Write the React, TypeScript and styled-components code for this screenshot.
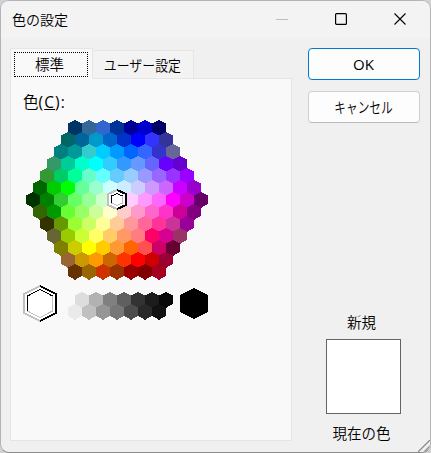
import React from "react";
import styled, { createGlobalStyle } from "styled-components";

const Global = createGlobalStyle`
  * { box-sizing: border-box; }
  body { margin: 0; background: #d2d2d2; overflow: hidden; }
`;

const Dialog = styled.div`
  width: 431px;
  height: 453px;
  display: flex;
  flex-direction: column;
  position: relative;
  overflow: hidden;
  background: #f0f0f0;
  border: 1px solid #b4b4b4;
  border-bottom-color: #8c8c8c;
  border-radius: 9px;
  color: #000;
  font: 350 15px/20px "Open Sans", "Noto Sans CJK JP", sans-serif;
`;

const TitleBar = styled.header`
  height: 37px;
  flex: none;
  display: flex;
  align-items: center;
  background: #f3f3f3;
  padding: 0 0 1px 11px;
`;

const Title = styled.h1`
  margin: 0;
  flex: 1;
  font-size: 14px;
  font-weight: 350;
  font-family: "Noto Sans CJK JP", sans-serif;
`;

const Controls = styled.div`
  display: flex;
`;

const ControlButton = styled.button`
  width: 59px;
  height: 36px;
  padding: 0;
  border: 0;
  background: none;
  display: flex;
  align-items: center;
  justify-content: center;
`;

const Body = styled.div`
  flex: 1;
  display: flex;
  gap: 15px;
  padding: 10px 10px 11px 9px;
`;

const TabArea = styled.section`
  width: 283px;
  display: flex;
  flex-direction: column;
`;

const TabList = styled.div`
  display: flex;
  align-items: flex-end;
  height: 31px;
  margin-bottom: -1px;
`;

const Tab = styled.button<{ $active?: boolean }>`
  position: relative;
  z-index: ${(p) => (p.$active ? 1 : 0)};
  width: ${(p) => (p.$active ? 83 : 101)}px;
  height: ${(p) => (p.$active ? 31 : 29)}px;
  padding: ${(p) => (p.$active ? "2px 3px 1px" : "0 2px 0 0")};
  border: 1px solid #e5e5e5;
  border-left-width: ${(p) => (p.$active ? 1 : 0)}px;
  border-bottom-color: ${(p) => (p.$active ? "#f9f9f9" : "#e5e5e5")};
  background: ${(p) => (p.$active ? "#f9f9f9" : "#f3f3f3")};
  color: #000;
  font: 350 14.5px/20px "Noto Sans CJK JP", sans-serif;
  white-space: nowrap;
`;

const FocusFrame = styled.span`
  display: grid;
  place-items: center;
  width: 74px;
  height: 25px;
  padding: 0 3px 1px 0;
  border: 1px dotted #000;
`;

const Kana = styled.span<{ $scale: number }>`
  display: inline-block;
  transform: scaleX(${(p) => p.$scale});
  margin: 0 -8px;
`;

const TabPanel = styled.div`
  flex: 1;
  width: 282px;
  border: 1px solid #e5e5e5;
  background: #f9f9f9;
  padding: 12px 12px 0;
`;

const Label = styled.div`
  height: 25px;
  line-height: 21px;
  font-size: 15.5px;
  font-family: "Noto Sans CJK JP", sans-serif;
`;

const Mnemonic = styled.span`
  font-family: "Open Sans", sans-serif;
  font-weight: 400;
  letter-spacing: 1.1px;
`;

const Palette = styled.svg`
  display: block;
`;

const Side = styled.aside`
  width: 112px;
  display: flex;
  flex-direction: column;
  align-items: center;
`;

const Button = styled.button<{ $primary?: boolean }>`
  width: 112px;
  height: 32px;
  flex: none;
  margin-bottom: 11px;
  padding: 0 1px 0 0;
  border: 1px solid ${(p) => (p.$primary ? "#0078d4" : "#d0d0d0")};
  border-bottom-color: ${(p) => (p.$primary ? "#0078d4" : "#bababa")};
  border-radius: 4px;
  background: #fdfdfd;
  color: #000;
  font: ${(p) => (p.$primary ? 400 : 350)} 15px/20px "Open Sans", "Noto Sans CJK JP", sans-serif;
`;

const Preview = styled.div`
  margin: auto 2px -3px 0;
  display: flex;
  flex-direction: column;
  align-items: center;
  line-height: 22px;
  font-family: "Noto Sans CJK JP", sans-serif;
  font-size: 14.5px;
`;

const Swatch = styled.div`
  width: 75px;
  height: 75px;
  margin: 6px 0 8px;
  border: 1px solid #646464;
  background: #fff;
`;

const PreviewLabel = styled.span`
  margin-left: -3px;
`;

const Grip = styled.svg`
  position: absolute;
  right: 0;
  bottom: 0;
`;

const rows = [
  "003366 336699 3366CC 003399 000099 0000CC 000066",
  "006666 006699 0099CC 0066CC 0033CC 0000FF 3333FF 333399",
  "008080 009999 33CCCC 00CCFF 0099FF 0066FF 3366FF 3333CC 666699",
  "339966 00CC99 00FFCC 00FFFF 33CCFF 3399FF 6699FF 6666FF 6600FF 6600CC",
  "339933 00CC66 00FF99 66FFCC 66FFFF 66CCFF 99CCFF 9999FF 9966FF 9933FF 9900FF",
  "006600 00CC00 00FF00 66FF99 99FFCC CCFFFF CCECFF CCCCFF CC99FF CC66FF CC00FF 9900CC",
  "003300 008000 33CC33 66FF66 99FF99 CCFFCC FFFFFF FFCCFF FF99FF FF66FF FF00FF CC00CC 660066",
  "336600 009900 66FF33 99FF66 CCFF99 FFFFCC FFCCCC FF99CC FF66CC FF33CC CC0099 800080",
  "333300 669900 99FF33 CCFF66 FFFF99 FFCC99 FF9999 FF6699 FF3399 CC3399 990099",
  "666633 99CC00 CCFF33 FFFF66 FFCC66 FF9966 FF7C80 FF0066 D60093 993366",
  "808000 CCCC00 FFFF00 FFCC00 FF9933 FF6600 FF5050 CC0066 660033",
  "996633 CC9900 FF9900 CC6600 FF3300 FF0000 CC0000 990033",
  "663300 996600 CC3300 993300 990000 800000 A50021",
].map((r) => r.split(" "));

const lightGreys = "DDDDDD B2B2B2 808080 5F5F5F 333333 1C1C1C 080808".split(" ");
const darkGreys = "EAEAEA C0C0C0 969696 777777 4D4D4D 292929 111111".split(" ");

const hexPoints = (x: number, y: number, w: number, h: number, cap: number) =>
  [
    [x + w / 2, y],
    [x + w, y + cap],
    [x + w, y + h - cap],
    [x + w / 2, y + h],
    [x, y + h - cap],
    [x, y + cap],
  ]
    .map((p) => p.join(","))
    .join(" ");

const HexRow = ({ colors, x, y }: { colors: string[]; x: number; y: number }) => (
  <g>
    {colors.map((c, i) => (
      <polygon key={i} points={hexPoints(x + i * 14, y - 0.3, 14, 16.2, 4)} fill={`#${c}`} />
    ))}
  </g>
);

/* Selection ring: black on the right half, grey on the left, inverted inside. */
const Ring = ({ x, y, w, h, cap, inset }: { x: number; y: number; w: number; h: number; cap: number; inset: number }) => {
  const m = x + w / 2;
  const l = x + inset;
  const r = x + w - inset;
  return (
    <g fill="none">
      <polygon points={hexPoints(x, y, w, h, cap)} fill="#fff" />
      <path d={`M${m} ${y + 1}L${x + 1} ${y + cap}V${y + h - cap}L${m} ${y + h - 1}`} stroke="#c0c0c0" strokeWidth="2" />
      <path d={`M${m} ${y + 1}L${x + w - 1} ${y + cap}V${y + h - cap}L${m} ${y + h - 1}`} stroke="#000" strokeWidth="2" />
      <path d={`M${r} ${y + cap + 2}V${y + h - cap - 2}L${m} ${y + h - inset}L${l} ${y + h - cap - 2}`} stroke="#c0c0c0" />
      <path d={`M${l} ${y + h - cap - 2}V${y + cap + 2}L${m} ${y + inset}L${r} ${y + cap + 2}`} stroke="#000" />
    </g>
  );
};

export default function App() {
  return (
    <>
      <Global />
      <Dialog>
        <TitleBar>
          <Title>色の設定</Title>
          <Controls>
            <ControlButton aria-label="最小化">
              <svg width="13" height="12"><path d="M0 6.5H12" stroke="#bdbdbd" /></svg>
            </ControlButton>
            <ControlButton aria-label="最大化">
              <svg width="13" height="12"><rect x=".6" y=".6" width="10.8" height="10.8" rx="1" fill="none" stroke="#000" strokeWidth="1.2" /></svg>
            </ControlButton>
            <ControlButton aria-label="閉じる">
              <svg width="13" height="12"><path d="M.5 .5L11.5 11.5M11.5 .5L.5 11.5" stroke="#000" strokeWidth="1.1" /></svg>
            </ControlButton>
          </Controls>
        </TitleBar>
        <Body>
          <TabArea>
            <TabList>
              <Tab $active><FocusFrame>標準</FocusFrame></Tab>
              <Tab><Kana $scale={0.89}>ユーザー設定</Kana></Tab>
            </TabList>
            <TabPanel>
              <Label>色<Mnemonic>(<u>C</u>):</Mnemonic></Label>
              <Palette width="200" height="210" viewBox="23 116 200 210" shapeRendering="crispEdges">
                {rows.map((r, i) => (
                  <HexRow key={i} colors={r} x={117 - r.length * 7} y={120 + i * 12} />
                ))}
                <HexRow colors={lightGreys} x={75} y={292} />
                <HexRow colors={darkGreys} x={68} y={304} />
                <Ring x={107} y={189} w={20} h={21} cap={5} inset={4.5} />
                <Ring x={23} y={285} w={34} h={37} cap={9} inset={4.5} />
                <polygon points={hexPoints(180, 288, 28, 31, 7)} fill="#000" />
              </Palette>
            </TabPanel>
          </TabArea>
          <Side>
            <Button $primary>OK</Button>
            <Button><Kana $scale={0.78}>キャンセル</Kana></Button>
            <Preview>
              <PreviewLabel>新規</PreviewLabel>
              <Swatch />
              <PreviewLabel>現在の色</PreviewLabel>
            </Preview>
          </Side>
        </Body>
        <Grip width="12" height="12"><path d="M0 12L12 0M6 12L12 6" stroke="#8c8c8c" strokeWidth="1.3" /></Grip>
      </Dialog>
    </>
  );
}
